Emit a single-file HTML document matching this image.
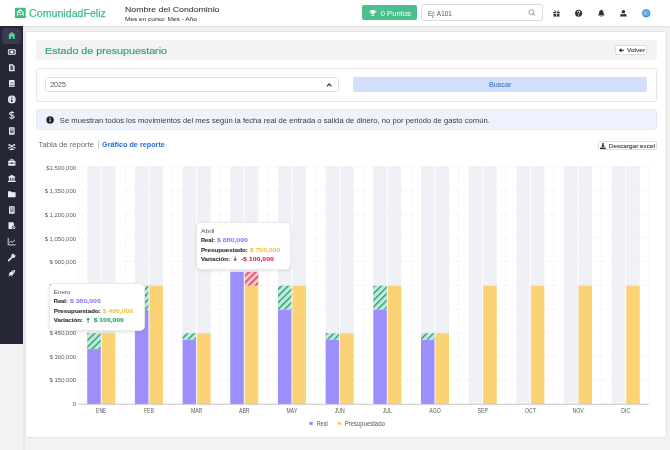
<!DOCTYPE html>
<html><head><meta charset="utf-8">
<style>
*{margin:0;padding:0;box-sizing:border-box}
html,body{width:670px;height:450px;overflow:hidden;background:#f2f2f2;font-family:"Liberation Sans", sans-serif;position:relative}
.a{position:absolute;white-space:nowrap}
svg{position:absolute;left:0;top:0;font-family:"Liberation Sans", sans-serif;will-change:transform}
.tt{position:absolute;background:#fff;border:0.6px solid #e9e9e9;border-radius:5px;box-shadow:0 1px 3.5px rgba(0,0,0,0.10)}
</style></head><body>
<div class="a" style="left:0;top:0;width:670px;height:26px;background:#fff;box-shadow:0 1px 2px rgba(0,0,0,0.08)"></div>
<div class="a" style="left:362px;top:5.4px;width:54.9px;height:14.9px;background:#4cc08c;border-radius:2px"></div>
<div class="a" style="left:420.7px;top:4.2px;width:122px;height:17.3px;background:#fff;border:0.8px solid #dcdcdc;border-radius:3px"></div>
<div class="a" style="left:0;top:26px;width:23px;height:317.7px;background:#262736"></div>
<div class="a" style="left:23px;top:26px;width:2px;height:424px;background:#eaeaed"></div>
<div class="a" style="left:2.7px;top:28.9px;width:17.8px;height:13.9px;background:#3a3b50;border-radius:2px;outline:0.6px dotted #4b4c60;outline-offset:-0.6px"></div>
<div class="a" style="left:25px;top:30.5px;width:642.4px;height:407.2px;background:#fff;border:0.8px solid #e4e4e4;border-radius:3px"></div>
<div class="a" style="left:35.5px;top:40px;width:621.5px;height:20.3px;background:#f3f3f3;border-radius:3px"></div>
<div class="a" style="left:615.4px;top:45.4px;width:32.1px;height:9.9px;background:#fff;border:0.6px solid #ddd;border-radius:1.5px"></div>
<div class="a" style="left:35.5px;top:68px;width:621.5px;height:33.5px;background:#fff;border:1px solid #e7e7e7;border-radius:3px"></div>
<div class="a" style="left:44.6px;top:77.1px;width:294.9px;height:14.8px;background:#fff;border:0.8px solid #e0e0e0;border-radius:3px"></div>
<div class="a" style="left:352.8px;top:77.2px;width:294.7px;height:14.6px;background:#d2dffa;border-radius:2px"></div>
<div class="a" style="left:35.5px;top:108.9px;width:621.5px;height:21.4px;background:#eef2fc;border:0.8px solid #e2e8f8;border-radius:3px"></div>
<div class="a" style="left:98.3px;top:140.1px;width:0.8px;height:8.9px;background:#ccc"></div>
<div class="a" style="left:597.6px;top:141.2px;width:59.6px;height:9.3px;background:#fff;border:0.6px solid #ddd;border-radius:1.5px"></div>
<svg width="670" height="450">
<text x="29.10" y="17.00" font-size="11.313" fill="#3dbd85" stroke="#3dbd85" stroke-width="0.25" textLength="76.81" lengthAdjust="spacingAndGlyphs">ComunidadFeliz</text>
<text x="125.00" y="12.00" font-size="7.402" fill="#333" stroke="#333" stroke-width="0.06" textLength="94.49" lengthAdjust="spacingAndGlyphs">Nombre del Condominio</text>
<text x="125.00" y="21.00" font-size="6.006" fill="#444" stroke="#444" stroke-width="0.05" textLength="71.80" lengthAdjust="spacingAndGlyphs">Mes en curso: Mes - Año</text>
<text x="380.70" y="16.00" font-size="7.123" fill="#fff" textLength="30.22" lengthAdjust="spacingAndGlyphs">0 Puntos</text>
<text x="428.00" y="15.50" font-size="6.704" fill="#555" textLength="23.80" lengthAdjust="spacingAndGlyphs">Ej: A101</text>
<text x="45.00" y="54.00" font-size="9.777" fill="#2ba57b" stroke="#2ba57b" stroke-width="0.18" textLength="122.02" lengthAdjust="spacingAndGlyphs">Estado de presupuestario</text>
<text x="627.00" y="52.00" font-size="6.006" fill="#333" stroke="#333" stroke-width="0.08" textLength="18.10" lengthAdjust="spacingAndGlyphs">Volver</text>
<text x="50.15" y="87.00" font-size="7.402" fill="#555" textLength="15.90" lengthAdjust="spacingAndGlyphs">2025</text>
<text x="488.90" y="87.00" font-size="7.402" fill="#2f6ccc" stroke="#2f6ccc" stroke-width="0.04" textLength="22.52" lengthAdjust="spacingAndGlyphs">Buscar</text>
<text x="59.80" y="122.60" font-size="7.123" fill="#3a3a3a" textLength="430.02" lengthAdjust="spacingAndGlyphs">Se muestran todos los movimientos del mes según la fecha real de entrada o salida de dinero, no por periodo de gasto común.</text>
<text x="38.60" y="147.00" font-size="6.704" fill="#6a6a6a" textLength="55.42" lengthAdjust="spacingAndGlyphs">Tabla de reporte</text>
<text x="102.00" y="147.00" font-size="6.704" font-weight="bold" fill="#2a6bd0" textLength="62.89" lengthAdjust="spacingAndGlyphs">Gráfico de reporte</text>
<text x="608.80" y="148.00" font-size="6.006" fill="#333" stroke="#333" stroke-width="0.08" textLength="46.20" lengthAdjust="spacingAndGlyphs">Descargar excel</text>
<defs>
<pattern id="hg" patternUnits="userSpaceOnUse" width="4.7" height="4.7" patternTransform="translate(1.5,0) rotate(45)">
<rect width="4.7" height="4.7" fill="#c3e9da"/><rect x="0" y="0" width="1.3" height="4.7" fill="#1a9c70"/></pattern>
<pattern id="hr" patternUnits="userSpaceOnUse" width="4.7" height="4.7" patternTransform="translate(1.5,0) rotate(45)">
<rect width="4.7" height="4.7" fill="#f9c3cb"/><rect x="0" y="0" width="1.4" height="4.7" fill="#d8355a"/></pattern>
</defs>
<rect x="87.24" y="166.5" width="13.5" height="237.60" fill="#f0f1f7"/>
<rect x="101.74" y="166.5" width="13.5" height="237.60" fill="#f0f1f7"/>
<rect x="134.92" y="166.5" width="13.5" height="237.60" fill="#f0f1f7"/>
<rect x="149.42" y="166.5" width="13.5" height="237.60" fill="#f0f1f7"/>
<rect x="182.60" y="166.5" width="13.5" height="237.60" fill="#f0f1f7"/>
<rect x="197.10" y="166.5" width="13.5" height="237.60" fill="#f0f1f7"/>
<rect x="230.28" y="166.5" width="13.5" height="237.60" fill="#f0f1f7"/>
<rect x="244.78" y="166.5" width="13.5" height="237.60" fill="#f0f1f7"/>
<rect x="277.96" y="166.5" width="13.5" height="237.60" fill="#f0f1f7"/>
<rect x="292.46" y="166.5" width="13.5" height="237.60" fill="#f0f1f7"/>
<rect x="325.64" y="166.5" width="13.5" height="237.60" fill="#f0f1f7"/>
<rect x="340.14" y="166.5" width="13.5" height="237.60" fill="#f0f1f7"/>
<rect x="373.32" y="166.5" width="13.5" height="237.60" fill="#f0f1f7"/>
<rect x="387.82" y="166.5" width="13.5" height="237.60" fill="#f0f1f7"/>
<rect x="421.00" y="166.5" width="13.5" height="237.60" fill="#f0f1f7"/>
<rect x="435.50" y="166.5" width="13.5" height="237.60" fill="#f0f1f7"/>
<rect x="468.68" y="166.5" width="13.5" height="237.60" fill="#f0f1f7"/>
<rect x="483.18" y="166.5" width="13.5" height="237.60" fill="#f0f1f7"/>
<rect x="516.36" y="166.5" width="13.5" height="237.60" fill="#f0f1f7"/>
<rect x="530.86" y="166.5" width="13.5" height="237.60" fill="#f0f1f7"/>
<rect x="564.04" y="166.5" width="13.5" height="237.60" fill="#f0f1f7"/>
<rect x="578.54" y="166.5" width="13.5" height="237.60" fill="#f0f1f7"/>
<rect x="611.72" y="166.5" width="13.5" height="237.60" fill="#f0f1f7"/>
<rect x="626.22" y="166.5" width="13.5" height="237.60" fill="#f0f1f7"/>
<line x1="78.0" y1="166.50" x2="648.7" y2="166.50" stroke="#e8e8ec" stroke-width="0.7" stroke-dasharray="1.2,1.5"/>
<line x1="78.0" y1="190.26" x2="648.7" y2="190.26" stroke="#e8e8ec" stroke-width="0.7" stroke-dasharray="1.2,1.5"/>
<line x1="78.0" y1="214.02" x2="648.7" y2="214.02" stroke="#e8e8ec" stroke-width="0.7" stroke-dasharray="1.2,1.5"/>
<line x1="78.0" y1="237.78" x2="648.7" y2="237.78" stroke="#e8e8ec" stroke-width="0.7" stroke-dasharray="1.2,1.5"/>
<line x1="78.0" y1="261.54" x2="648.7" y2="261.54" stroke="#e8e8ec" stroke-width="0.7" stroke-dasharray="1.2,1.5"/>
<line x1="78.0" y1="285.30" x2="648.7" y2="285.30" stroke="#e8e8ec" stroke-width="0.7" stroke-dasharray="1.2,1.5"/>
<line x1="78.0" y1="309.06" x2="648.7" y2="309.06" stroke="#e8e8ec" stroke-width="0.7" stroke-dasharray="1.2,1.5"/>
<line x1="78.0" y1="332.82" x2="648.7" y2="332.82" stroke="#e8e8ec" stroke-width="0.7" stroke-dasharray="1.2,1.5"/>
<line x1="78.0" y1="356.58" x2="648.7" y2="356.58" stroke="#e8e8ec" stroke-width="0.7" stroke-dasharray="1.2,1.5"/>
<line x1="78.0" y1="380.34" x2="648.7" y2="380.34" stroke="#e8e8ec" stroke-width="0.7" stroke-dasharray="1.2,1.5"/>
<line x1="78.0" y1="404.10" x2="648.7" y2="404.10" stroke="#e8e8ec" stroke-width="0.7" stroke-dasharray="1.2,1.5"/>
<line x1="78.00" y1="166.5" x2="78.00" y2="404.1" stroke="#e8e8ec" stroke-width="0.7" stroke-dasharray="1.2,1.5"/>
<line x1="125.56" y1="166.5" x2="125.56" y2="404.1" stroke="#e8e8ec" stroke-width="0.7" stroke-dasharray="1.2,1.5"/>
<line x1="173.12" y1="166.5" x2="173.12" y2="404.1" stroke="#e8e8ec" stroke-width="0.7" stroke-dasharray="1.2,1.5"/>
<line x1="220.68" y1="166.5" x2="220.68" y2="404.1" stroke="#e8e8ec" stroke-width="0.7" stroke-dasharray="1.2,1.5"/>
<line x1="268.23" y1="166.5" x2="268.23" y2="404.1" stroke="#e8e8ec" stroke-width="0.7" stroke-dasharray="1.2,1.5"/>
<line x1="315.79" y1="166.5" x2="315.79" y2="404.1" stroke="#e8e8ec" stroke-width="0.7" stroke-dasharray="1.2,1.5"/>
<line x1="363.35" y1="166.5" x2="363.35" y2="404.1" stroke="#e8e8ec" stroke-width="0.7" stroke-dasharray="1.2,1.5"/>
<line x1="410.91" y1="166.5" x2="410.91" y2="404.1" stroke="#e8e8ec" stroke-width="0.7" stroke-dasharray="1.2,1.5"/>
<line x1="458.47" y1="166.5" x2="458.47" y2="404.1" stroke="#e8e8ec" stroke-width="0.7" stroke-dasharray="1.2,1.5"/>
<line x1="506.03" y1="166.5" x2="506.03" y2="404.1" stroke="#e8e8ec" stroke-width="0.7" stroke-dasharray="1.2,1.5"/>
<line x1="553.58" y1="166.5" x2="553.58" y2="404.1" stroke="#e8e8ec" stroke-width="0.7" stroke-dasharray="1.2,1.5"/>
<line x1="601.14" y1="166.5" x2="601.14" y2="404.1" stroke="#e8e8ec" stroke-width="0.7" stroke-dasharray="1.2,1.5"/>
<line x1="648.70" y1="166.5" x2="648.70" y2="404.1" stroke="#e8e8ec" stroke-width="0.7" stroke-dasharray="1.2,1.5"/>
<rect x="101.74" y="333.22" width="13.5" height="70.88" fill="#fbd275"/>
<rect x="87.24" y="349.06" width="13.5" height="55.04" fill="#9d8ffb"/>
<rect x="87.24" y="333.22" width="13.5" height="15.84" fill="url(#hg)"/>
<rect x="149.42" y="285.70" width="13.5" height="118.40" fill="#fbd275"/>
<rect x="134.92" y="309.46" width="13.5" height="94.64" fill="#9d8ffb"/>
<rect x="134.92" y="285.70" width="13.5" height="23.76" fill="url(#hg)"/>
<rect x="197.10" y="333.22" width="13.5" height="70.88" fill="#fbd275"/>
<rect x="182.60" y="339.56" width="13.5" height="64.54" fill="#9d8ffb"/>
<rect x="182.60" y="333.22" width="13.5" height="6.34" fill="url(#hg)"/>
<rect x="244.78" y="285.70" width="13.5" height="118.40" fill="#fbd275"/>
<rect x="230.28" y="271.90" width="13.5" height="132.20" fill="#9d8ffb"/>
<rect x="244.78" y="271.90" width="13.5" height="13.80" fill="url(#hr)"/>
<rect x="292.46" y="285.70" width="13.5" height="118.40" fill="#fbd275"/>
<rect x="277.96" y="309.46" width="13.5" height="94.64" fill="#9d8ffb"/>
<rect x="277.96" y="285.70" width="13.5" height="23.76" fill="url(#hg)"/>
<rect x="340.14" y="333.22" width="13.5" height="70.88" fill="#fbd275"/>
<rect x="325.64" y="339.56" width="13.5" height="64.54" fill="#9d8ffb"/>
<rect x="325.64" y="333.22" width="13.5" height="6.34" fill="url(#hg)"/>
<rect x="387.82" y="285.70" width="13.5" height="118.40" fill="#fbd275"/>
<rect x="373.32" y="309.46" width="13.5" height="94.64" fill="#9d8ffb"/>
<rect x="373.32" y="285.70" width="13.5" height="23.76" fill="url(#hg)"/>
<rect x="435.50" y="333.22" width="13.5" height="70.88" fill="#fbd275"/>
<rect x="421.00" y="339.56" width="13.5" height="64.54" fill="#9d8ffb"/>
<rect x="421.00" y="333.22" width="13.5" height="6.34" fill="url(#hg)"/>
<rect x="483.18" y="285.70" width="13.5" height="118.40" fill="#fbd275"/>
<rect x="530.86" y="285.70" width="13.5" height="118.40" fill="#fbd275"/>
<rect x="578.54" y="285.70" width="13.5" height="118.40" fill="#fbd275"/>
<rect x="626.22" y="285.70" width="13.5" height="118.40" fill="#fbd275"/>
<line x1="78.0" y1="404.3" x2="648.7" y2="404.3" stroke="#cacad0" stroke-width="1"/>
<rect x="309.5" y="422" width="3.2" height="2.8" fill="#8f7ef8"/>
<rect x="337.9" y="422" width="3.2" height="2.8" fill="#f8c75a"/>
<text x="46.32" y="170.00" font-size="6.145" fill="#5a5a5a" textLength="29.68" lengthAdjust="spacingAndGlyphs">$1,500,000</text>
<text x="44.66" y="193.00" font-size="6.145" fill="#5a5a5a" textLength="31.33" lengthAdjust="spacingAndGlyphs">$ 1,350,000</text>
<text x="44.66" y="217.00" font-size="6.145" fill="#5a5a5a" textLength="31.33" lengthAdjust="spacingAndGlyphs">$ 1,200,000</text>
<text x="44.66" y="241.00" font-size="6.145" fill="#5a5a5a" textLength="31.33" lengthAdjust="spacingAndGlyphs">$ 1,050,000</text>
<text x="49.61" y="264.00" font-size="6.145" fill="#5a5a5a" textLength="26.38" lengthAdjust="spacingAndGlyphs">$ 900,000</text>
<text x="49.61" y="288.00" font-size="6.145" fill="#5a5a5a" textLength="26.38" lengthAdjust="spacingAndGlyphs">$ 750,000</text>
<text x="49.61" y="311.00" font-size="6.145" fill="#5a5a5a" textLength="26.38" lengthAdjust="spacingAndGlyphs">$ 600,000</text>
<text x="49.61" y="335.00" font-size="6.145" fill="#5a5a5a" textLength="26.38" lengthAdjust="spacingAndGlyphs">$ 450,000</text>
<text x="49.61" y="359.00" font-size="6.145" fill="#5a5a5a" textLength="26.38" lengthAdjust="spacingAndGlyphs">$ 300,000</text>
<text x="49.61" y="382.00" font-size="6.145" fill="#5a5a5a" textLength="26.38" lengthAdjust="spacingAndGlyphs">$ 150,000</text>
<text x="72.71" y="406.00" font-size="6.145" fill="#5a5a5a" textLength="3.30" lengthAdjust="spacingAndGlyphs">0</text>
<text x="95.96" y="413.00" font-size="6.425" fill="#5a5a5a" textLength="10.57" lengthAdjust="spacingAndGlyphs">ENE</text>
<text x="143.92" y="413.00" font-size="6.425" fill="#5a5a5a" textLength="10.00" lengthAdjust="spacingAndGlyphs">FEB</text>
<text x="190.89" y="413.00" font-size="6.425" fill="#5a5a5a" textLength="11.42" lengthAdjust="spacingAndGlyphs">MAR</text>
<text x="239.00" y="413.00" font-size="6.425" fill="#5a5a5a" textLength="10.57" lengthAdjust="spacingAndGlyphs">ABR</text>
<text x="286.58" y="413.00" font-size="6.425" fill="#5a5a5a" textLength="10.76" lengthAdjust="spacingAndGlyphs">MAY</text>
<text x="334.64" y="413.00" font-size="6.425" fill="#5a5a5a" textLength="9.99" lengthAdjust="spacingAndGlyphs">JUN</text>
<text x="382.75" y="413.00" font-size="6.425" fill="#5a5a5a" textLength="9.14" lengthAdjust="spacingAndGlyphs">JUL</text>
<text x="429.28" y="413.00" font-size="6.425" fill="#5a5a5a" textLength="11.42" lengthAdjust="spacingAndGlyphs">AGO</text>
<text x="477.54" y="413.00" font-size="6.425" fill="#5a5a5a" textLength="10.28" lengthAdjust="spacingAndGlyphs">SEP</text>
<text x="524.94" y="413.00" font-size="6.425" fill="#5a5a5a" textLength="10.85" lengthAdjust="spacingAndGlyphs">OCT</text>
<text x="572.48" y="413.00" font-size="6.425" fill="#5a5a5a" textLength="11.14" lengthAdjust="spacingAndGlyphs">NOV</text>
<text x="621.30" y="413.00" font-size="6.425" fill="#5a5a5a" textLength="8.85" lengthAdjust="spacingAndGlyphs">DIC</text>
<text x="316.70" y="426.00" font-size="6.425" fill="#666" stroke="#666" stroke-width="0.05" textLength="11.11" lengthAdjust="spacingAndGlyphs">Real</text>
<text x="344.80" y="426.00" font-size="6.425" fill="#666" stroke="#666" stroke-width="0.05" textLength="40.01" lengthAdjust="spacingAndGlyphs">Presupuestado</text>
<g transform="translate(11.8,35.60)"><path d="M-3.7,-0.3 L0,-3.6 L3.7,-0.3 L2.9,-0.3 L2.9,3.4 L0.9,3.4 L0.9,1.2 L-0.9,1.2 L-0.9,3.4 L-2.9,3.4 L-2.9,-0.3 Z" fill="#4fd89b"/></g>
<g transform="translate(11.8,52.00)"><rect x="-3.9" y="-2.7" width="7.8" height="5.4" rx="1" fill="#ececf0"/><rect x="-3.1" y="-1.9" width="6.2" height="3.8" rx="0.5" fill="#5a5b68"/><circle cx="0" cy="0" r="1.6" fill="#ececf0"/><circle cx="-3" cy="-1.8" r="0.5" fill="#ececf0"/><circle cx="3" cy="-1.8" r="0.5" fill="#ececf0"/><circle cx="-3" cy="1.8" r="0.5" fill="#ececf0"/><circle cx="3" cy="1.8" r="0.5" fill="#ececf0"/></g>
<g transform="translate(11.8,67.80)"><path d="M-2.8,-3.5 L1,-3.5 L2.8,-1.6 L2.8,3.5 L-2.8,3.5 Z" fill="#ececf0"/><path d="M-1.4,-2.3 L0.6,-2.3 L1.4,-0.8 L1.4,2.2 L-1.4,2.2 Z" fill="#555"/></g>
<g transform="translate(11.8,83.60)"><rect x="-2.8" y="-3.5" width="5.6" height="7" rx="0.6" fill="#ececf0"/><rect x="-1.5" y="-1.1" width="3" height="0.8" fill="#555"/><rect x="-2.1" y="1.3" width="4.2" height="1.4" fill="#777"/></g>
<g transform="translate(11.8,99.40)"><circle cx="0" cy="0" r="3.9" fill="#ececf0"/><path d="M0,-2.8 L0,1.2" stroke="#252636" stroke-width="0.8"/><circle cx="0" cy="1.6" r="1" fill="#252636"/><circle cx="-2.2" cy="-1.2" r="0.45" fill="#555"/><circle cx="2.2" cy="-1.2" r="0.45" fill="#555"/><circle cx="-2.6" cy="0.8" r="0.4" fill="#555"/><circle cx="2.6" cy="0.8" r="0.4" fill="#555"/></g>
<g transform="translate(11.8,115.20)"><path d="M2.2,-2.1 Q1.6,-3 0,-3 Q-2.2,-3 -2.2,-1.5 Q-2.2,-0.3 0,0 Q2.3,0.3 2.3,1.6 Q2.3,3 0,3 Q-1.7,3 -2.3,2" fill="none" stroke="#ececf0" stroke-width="1.1"/><path d="M0,-4.2 L0,4.2" stroke="#ececf0" stroke-width="0.9"/></g>
<g transform="translate(11.8,131.00)"><rect x="-2.8" y="-3.8" width="5.6" height="7.6" rx="0.8" fill="#ececf0"/><rect x="-1.7" y="-2.5" width="3.4" height="4.6" fill="#666"/><rect x="-0.9" y="-2" width="1.8" height="1.4" fill="#ccc"/></g>
<g transform="translate(11.8,146.80)"><circle cx="-2.3" cy="-1.8" r="1.1" fill="#ececf0"/><circle cx="2.3" cy="-1.8" r="1.1" fill="#ececf0"/><circle cx="0" cy="-0.6" r="1.2" fill="#ececf0"/><path d="M-4,1.2 Q-2.3,-0.6 -0.8,1 L-3.8,1.6Z" fill="#ececf0"/><path d="M4,1.2 Q2.3,-0.6 0.8,1 L3.8,1.6Z" fill="#ececf0"/><path d="M-2.6,3.2 Q0,-0.2 2.6,3.2Z" fill="#ececf0"/></g>
<g transform="translate(11.8,162.60)"><rect x="-1.5" y="-3.2" width="3" height="1.6" rx="0.5" fill="none" stroke="#ececf0" stroke-width="0.8"/><rect x="-3.7" y="-1.8" width="7.4" height="5" rx="0.7" fill="#ececf0"/><rect x="-3.7" y="0.2" width="7.4" height="0.6" fill="#252636"/><rect x="-0.7" y="-0.1" width="1.4" height="1.3" fill="#252636"/></g>
<g transform="translate(11.8,178.40)"><path d="M-3.6,-1.4 L0,-3.7 L3.6,-1.4 Z" fill="#ececf0"/><rect x="-3.3" y="-1.4" width="6.6" height="0.9" fill="#ececf0"/><rect x="-2.8" y="-0.5" width="1.2" height="2.8" fill="#ececf0"/><rect x="-0.6" y="-0.5" width="1.2" height="2.8" fill="#ececf0"/><rect x="1.6" y="-0.5" width="1.2" height="2.8" fill="#ececf0"/><rect x="-3.8" y="2.3" width="7.6" height="1.3" fill="#ececf0"/></g>
<g transform="translate(11.8,194.20)"><path d="M-3.8,-3 L-1,-3 L0,-2 L3.8,-2 L3.8,3 L-3.8,3 Z" fill="#ececf0"/></g>
<g transform="translate(11.8,210.00)"><rect x="-2.8" y="-3.8" width="5.6" height="7.6" rx="0.6" fill="#ececf0"/><rect x="-1.7" y="-2.8" width="3.4" height="5.6" fill="#777"/><rect x="-0.5" y="-2.8" width="1" height="3" fill="#ddd"/><rect x="-1.3" y="1.6" width="2.6" height="1.2" fill="#ececf0"/></g>
<g transform="translate(11.8,225.80)"><path d="M-3.3,-3.6 L1.2,-3.6 L2.2,-2.6 L2.2,3.3 L-3.3,3.3 Z" fill="#ececf0"/><circle cx="2" cy="1.6" r="2" fill="#252636"/><circle cx="2.1" cy="1.7" r="1.5" fill="#ececf0"/><circle cx="2.1" cy="1.7" r="0.7" fill="#252636"/></g>
<g transform="translate(11.8,241.60)"><path d="M-3.6,-3.6 L-3.6,3.3 L3.8,3.3" fill="none" stroke="#ececf0" stroke-width="0.9"/><path d="M-2.4,1.3 L-0.8,-0.4 L0.6,0.7 L3.2,-1.8" fill="none" stroke="#ececf0" stroke-width="0.9"/></g>
<g transform="translate(11.8,257.40)"><path d="M-3.2,3.2 L0.6,-0.6" stroke="#ececf0" stroke-width="1.6" stroke-linecap="round"/><circle cx="1.6" cy="-1.6" r="2.1" fill="#ececf0"/><path d="M1.5,-2 L3.3,-3.8 L4,-2.3 Z" fill="#252636"/></g>
<g transform="translate(11.8,273.20)"><path d="M-1.4,2 L-2.2,0.8 Q0,-3.6 3.3,-3.3 Q3.6,0 -0.8,2.2 Z" fill="#ececf0"/><path d="M-2.5,-0.3 L-0.8,-1.8 L-1.8,0.6 Z M0.6,2.4 L2,0.9 L-0.6,1.8Z" fill="#ececf0"/><path d="M-3.2,1 L-1.6,-0.8 L-0.2,-0.3 L-1.8,1.6Z M-1,3.3 L0.8,1.6 L0.3,3.1Z" fill="#ececf0"/><path d="M-2.2,1.4 L-3.4,3.4 L-1.4,2.2Z" fill="#ececf0"/><circle cx="1.4" cy="-1.4" r="0.6" fill="#252636"/></g>
<g transform="translate(556.5,13.3)"><rect x="-3.3" y="-1.4" width="6.6" height="1.6" fill="#333"/><rect x="-2.9" y="0.5" width="5.8" height="2.8" fill="#333"/><rect x="-0.4" y="-1.6" width="0.8" height="5" fill="#fff"/><path d="M-0.3,-1.6 Q-2.8,-3.8 -2.4,-2.2 Q-2,-1.4 -0.3,-1.6Z M0.3,-1.6 Q2.8,-3.8 2.4,-2.2 Q2,-1.4 0.3,-1.6Z" fill="#333"/><rect x="-3.3" y="0.1" width="6.6" height="0.45" fill="#fff"/></g>
<g transform="translate(578.6,13.3)"><circle r="3.5" fill="#333"/><path d="M-1.2,-1 Q-1.1,-2.3 0.1,-2.3 Q1.3,-2.3 1.3,-1.2 Q1.3,-0.5 0.4,-0.1 Q0,0.2 0,0.8" fill="none" stroke="#fff" stroke-width="0.9"/><circle cx="0" cy="1.8" r="0.55" fill="#fff"/></g>
<g transform="translate(601.3,13.3)"><path d="M-3.3,2.2 Q-2.3,1.3 -2.3,-0.5 Q-2.3,-3 0,-3.3 Q2.3,-3 2.3,-0.5 Q2.3,1.3 3.3,2.2 Z" fill="#333"/><rect x="-0.3" y="-4" width="0.6" height="1" fill="#333"/><path d="M-1,2.8 Q0,4.3 1,2.8Z" fill="#333"/></g>
<g transform="translate(623.4,13.3)"><circle cx="0" cy="-1.5" r="1.8" fill="#333"/><path d="M-3.4,3.3 Q-3.4,0.6 -1.3,0.4 L0,1.3 L1.3,0.4 Q3.4,0.6 3.4,3.3Z" fill="#333"/></g>
<g transform="translate(646.2,13.3)"><circle r="4.1" fill="#3f86e0"/><circle r="3.3" fill="#5fa0ee"/><path d="M-2.2,-1.5 Q-0.5,-2.6 0.3,-1 Q1.2,0.2 0.2,1.2 Q-0.6,2.2 -1.8,1.4Z" fill="#8cc2f6"/><path d="M1.2,-2.6 Q2.8,-1.5 2.6,0.6 Q1.8,-0.3 1.2,-2.6Z" fill="#9fdcc9"/><path d="M-3.6,-0.6 Q-3.6,1 -2.8,2" stroke="#d58b4c" stroke-width="0.5" fill="none"/></g>
<g transform="translate(531.4,12.2)"><circle r="2.5" fill="none" stroke="#888" stroke-width="0.8"/><path d="M1.8,1.8 L3.4,3.4" stroke="#888" stroke-width="0.9" stroke-linecap="round"/></g>
<g transform="translate(372.8,12.7)"><path d="M-1.9,-2.6 L1.9,-2.6 L1.9,-0.5 Q1.9,1.2 0,1.4 Q-1.9,1.2 -1.9,-0.5Z" fill="#fff"/><path d="M-1.9,-2 Q-3.6,-2 -3.2,-0.6 Q-2.8,0.4 -1.6,0.4" fill="none" stroke="#fff" stroke-width="0.6"/><path d="M1.9,-2 Q3.6,-2 3.2,-0.6 Q2.8,0.4 1.6,0.4" fill="none" stroke="#fff" stroke-width="0.6"/><rect x="-0.45" y="1.3" width="0.9" height="1.2" fill="#fff"/><rect x="-1.5" y="2.3" width="3" height="0.8" fill="#fff"/></g>
<g transform="translate(20.3,12.85)"><rect x="-5.4" y="-5.05" width="10.8" height="10.1" rx="0.5" fill="#3dbd85"/><path d="M-3.4,3.2 L-3.4,-0.2 Q-3.2,-1.2 -1.8,-2.4 L0.2,-3.9 Q1.2,-2.6 2.6,-1.6 Q3.6,-0.8 3.4,0.6 L3.4,3.2 Q0,0.8 -3.4,3.2Z" fill="#fff"/><path d="M-2.2,1.9 L-2.2,-0.2 L0.2,-2.4 L2.2,-0.6 L2.2,1.6 Q0,0.4 -2.2,1.9Z" fill="#3dbd85"/><circle cx="-0.4" cy="-0.5" r="0.8" fill="#fff"/><rect x="-5.4" y="3.2" width="10.8" height="1.85" fill="#3dbd85"/></g>
<g transform="translate(621.4,50.3)"><path d="M2.6,0 L-1.6,0" stroke="#333" stroke-width="1.1"/><path d="M-2.7,0 L0.1,-2.4 L0.1,2.4Z" fill="#333"/></g>
<g transform="translate(602.9,146)"><path d="M-0.7,-3 L0.7,-3 L0.7,-0.6 L2,-0.6 L0,1.4 L-2,-0.6 L-0.7,-0.6Z" fill="#333"/><rect x="-2.9" y="1.6" width="5.8" height="1.5" rx="0.3" fill="#333"/></g>
<g transform="translate(50.1,119.9)"><circle r="3.7" fill="#222"/><rect x="-0.5" y="-0.5" width="1" height="2.5" fill="#fff"/><circle cx="0" cy="-1.75" r="0.6" fill="#fff"/></g>
<g transform="translate(329.2,85)"><path d="M-2.2,1.2 L0,-1.0 L2.2,1.2" stroke="#444" stroke-width="1.25" fill="none"/></g>
</svg>
<div class="tt" style="left:48.6px;top:282.5px;width:96.2px;height:48.1px"></div>
<div class="tt" style="left:195.7px;top:221.7px;width:95.8px;height:48.5px"></div>
<svg width="670" height="450">
<text x="53.80" y="294.00" font-size="5.447" fill="#555" textLength="16.59" lengthAdjust="spacingAndGlyphs">Enero</text>
<text x="53.80" y="303.00" font-size="5.447" font-weight="bold" fill="#333" stroke="#333" stroke-width="0.12" textLength="14.00" lengthAdjust="spacingAndGlyphs">Real:</text>
<text x="69.90" y="303.00" font-size="5.447" font-weight="bold" fill="#8b7cf8" stroke="#8b7cf8" stroke-width="0.1" textLength="30.99" lengthAdjust="spacingAndGlyphs">$ 350,000</text>
<text x="53.80" y="313.00" font-size="5.447" font-weight="bold" fill="#333" stroke="#333" stroke-width="0.12" textLength="47.02" lengthAdjust="spacingAndGlyphs">Presupuestado:</text>
<text x="102.80" y="313.00" font-size="5.447" font-weight="bold" fill="#f5c242" stroke="#f5c242" stroke-width="0.1" textLength="30.29" lengthAdjust="spacingAndGlyphs">$ 450,000</text>
<text x="53.80" y="322.00" font-size="5.447" font-weight="bold" fill="#333" stroke="#333" stroke-width="0.12" textLength="29.10" lengthAdjust="spacingAndGlyphs">Variación:</text>
<path d="M88.1,318.4 L88.1,322.9" stroke="#22a073" stroke-width="1.0" fill="none"/><path d="M86.19999999999999,319.8 L88.1,317.6 L90.0,319.8 Z" fill="#22a073"/>
<text x="93.70" y="322.00" font-size="5.447" font-weight="bold" fill="#22a073" stroke="#22a073" stroke-width="0.1" textLength="30.19" lengthAdjust="spacingAndGlyphs">$ 100,000</text>
<text x="200.90" y="233.00" font-size="5.447" fill="#555" textLength="13.50" lengthAdjust="spacingAndGlyphs">Abril</text>
<text x="200.90" y="242.00" font-size="5.447" font-weight="bold" fill="#333" stroke="#333" stroke-width="0.12" textLength="14.00" lengthAdjust="spacingAndGlyphs">Real:</text>
<text x="217.00" y="242.00" font-size="5.447" font-weight="bold" fill="#8b7cf8" stroke="#8b7cf8" stroke-width="0.1" textLength="30.99" lengthAdjust="spacingAndGlyphs">$ 850,000</text>
<text x="200.90" y="252.00" font-size="5.447" font-weight="bold" fill="#333" stroke="#333" stroke-width="0.12" textLength="47.02" lengthAdjust="spacingAndGlyphs">Presupuestado:</text>
<text x="249.90" y="252.00" font-size="5.447" font-weight="bold" fill="#f5c242" stroke="#f5c242" stroke-width="0.1" textLength="30.29" lengthAdjust="spacingAndGlyphs">$ 750,000</text>
<text x="200.90" y="261.00" font-size="5.447" font-weight="bold" fill="#333" stroke="#333" stroke-width="0.12" textLength="29.10" lengthAdjust="spacingAndGlyphs">Variación:</text>
<path d="M235.2,256.6 L235.2,260.4" stroke="#cf2f4f" stroke-width="1.0" fill="none"/><path d="M233.29999999999998,258.9 L235.2,261.2 L237.1,258.9 Z" fill="#cf2f4f"/>
<text x="240.80" y="261.00" font-size="5.447" font-weight="bold" fill="#cf2f4f" stroke="#cf2f4f" stroke-width="0.1" textLength="33.11" lengthAdjust="spacingAndGlyphs">-$ 100,000</text>
</svg>
</body></html>
